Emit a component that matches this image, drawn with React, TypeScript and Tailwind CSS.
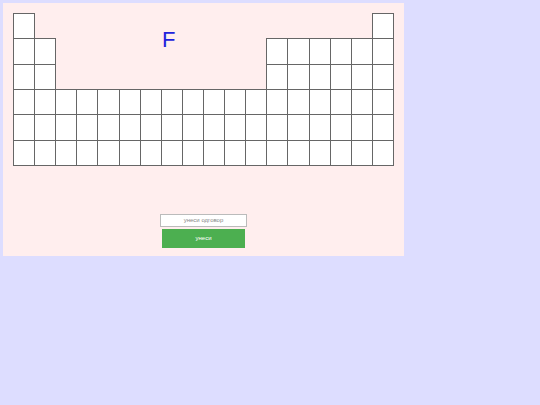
import React from "react";

const layout: boolean[][] = [
  Array.from({ length: 18 }, (_, i) => i === 0 || i === 17),
  Array.from({ length: 18 }, (_, i) => i < 2 || i >= 12),
  Array.from({ length: 18 }, (_, i) => i < 2 || i >= 12),
  Array.from({ length: 18 }, () => true),
  Array.from({ length: 18 }, () => true),
  Array.from({ length: 18 }, () => true),
];

export default function App() {
  return (
    <div className="min-h-[405px] w-full bg-[#ddddff] p-[3px]" style={{ fontFamily: '"Liberation Sans", Arial, sans-serif' }}>
      <div className="relative w-[401px] h-[253px] bg-[#ffeeee] pt-[10px] pl-[10px] flex flex-col">
        <div className="absolute left-[159px] top-[26px] text-[22px] leading-none text-[#2222dd]">F</div>
        <table className="border-collapse table-fixed w-[381px]">
          <tbody>
            {layout.map((row, r) => (
              <tr key={r} className="h-[25.33px]">
                {row.map((filled, c) => (
                  <td
                    key={c}
                    className={filled ? "border border-[#666666] bg-white p-0" : "p-0 border-0"}
                  />
                ))}
              </tr>
            ))}
          </tbody>
        </table>
        <div className="flex flex-col items-center mt-[48px] pr-[10px]">
          <input
            className="w-[87px] h-[13px] border border-[#bbbbbb] bg-white text-center text-[6px] text-[#666666] outline-none placeholder:text-[#888888]"
            placeholder="унеси одговор"
          />
          <button className="mt-[2px] w-[83px] h-[19px] bg-[#4caf50] text-white text-[6px] leading-none">
            унеси
          </button>
        </div>
      </div>
    </div>
  );
}
